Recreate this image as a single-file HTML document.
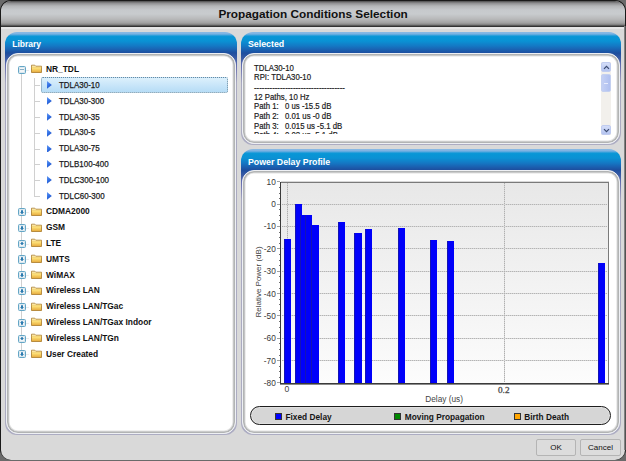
<!DOCTYPE html>
<html><head><meta charset="utf-8"><style>
*{margin:0;padding:0;box-sizing:border-box}
html,body{width:626px;height:461px;overflow:hidden;background:#6a6a6a;font-family:"Liberation Sans", sans-serif}
.a{position:absolute}
.t{position:absolute;white-space:nowrap;line-height:1}
</style></head>
<body>
<div class="a" style="left:0;top:0;width:626px;height:461px;background:#6a6a6a"></div><div class="a" style="left:0;top:0;width:626px;height:460px;border-radius:11px;background:#1a1a1a"></div><div class="a" style="left:1px;top:1px;width:624px;height:459px;border-radius:10px;background:#d9d9d9;overflow:hidden"><div class="a" style="left:0;top:0;width:624px;height:26px;background:linear-gradient(#4a4a4a 0px,#8c8c8e 2px,#b4b6b8 5px,#c6c9cc 9px,#c8cbce 13px,#b8b9ba 18px,#a0a0a0 22px,#7a7a7a 24px,#3a3a3a 25px,#2a2a2a 26px)"></div><div class="a" style="left:0;top:26px;width:624px;height:2px;background:#e6e6e6"></div></div><div class="a" style="left:623.6px;top:26px;width:2.4px;height:424px;background:linear-gradient(90deg,#9a9a9a,#3a3a3a)"></div><div class="t" style="left:218.4px;top:8.9px;font-size:11.8px;font-weight:bold;color:#111">Propagation Conditions Selection</div><div class="a" style="left:5px;top:31.6px;width:232px;height:403.59999999999997px;border-radius:12px;background:linear-gradient(#8abae4 0px,#7cb2e2 2px,#3aa2dc 3.2px,#0896d6 4.6px,#0a92d4 9px,#1478c4 14px,#1a62b2 17.5px,#1d4e9e 20.9px,#6a70b0 34.9px,#a8a8c0 50.9px,#acacc2 100%)"></div><div class="t" style="left:12.2px;top:40px;font-size:8.5px;font-weight:bold;color:#fff">Library</div><div class="a" style="left:6px;top:52.5px;width:230px;height:381.7px;border-radius:12px;background:#fff;border:1.9px solid #eef0f4;box-shadow:inset 0 0 0 1.6px #b2b4b4, inset 0 0 0 2.6px #e2e2e2"></div><div class="a" style="left:240.5px;top:31.6px;width:380.5px;height:113.4px;border-radius:12px;background:linear-gradient(#8abae4 0px,#7cb2e2 2px,#3aa2dc 3.2px,#0896d6 4.6px,#0a92d4 9px,#1478c4 14px,#1a62b2 17.5px,#1d4e9e 21.2px,#6a70b0 35.2px,#a8a8c0 51.2px,#acacc2 100%)"></div><div class="t" style="left:248px;top:39.8px;font-size:8.8px;font-weight:bold;color:#fff">Selected</div><div class="a" style="left:241.5px;top:52.8px;width:378.5px;height:91.2px;border-radius:12px;background:#fff;border:1.9px solid #eef0f4;box-shadow:inset 0 0 0 1.6px #b2b4b4, inset 0 0 0 2.6px #e2e2e2"></div><div class="a" style="left:240.5px;top:148.8px;width:380.5px;height:286.4px;border-radius:12px;background:linear-gradient(#8abae4 0px,#7cb2e2 2px,#3aa2dc 3.2px,#0896d6 4.6px,#0a92d4 9px,#1478c4 14px,#1a62b2 17.5px,#1d4e9e 20.9px,#6a70b0 34.9px,#a8a8c0 50.9px,#acacc2 100%)"></div><div class="t" style="left:248px;top:157.8px;font-size:8.8px;font-weight:bold;color:#fff">Power Delay Profile</div><div class="a" style="left:241.5px;top:169.70000000000002px;width:378.5px;height:264.5px;border-radius:12px;background:#fff;border:1.9px solid #eef0f4;box-shadow:inset 0 0 0 1.6px #b2b4b4, inset 0 0 0 2.6px #e2e2e2"></div><svg width="0" height="0" style="position:absolute"><defs><linearGradient id="ag" x1="0" y1="0" x2="0.6" y2="1"><stop offset="0" stop-color="#6a9cf2"/><stop offset="0.5" stop-color="#3474e8"/><stop offset="1" stop-color="#1c4cc0"/></linearGradient></defs></svg><div class="a" style="left:21px;top:73.5px;width:1px;height:276.76px;background:#d0d0d0"></div><div class="a" style="left:34px;top:77.5px;width:1px;height:118.56px;background:#d0d0d0"></div><div class="a" style="left:40.5px;top:77.2px;width:187.5px;height:15.5px;border:1px dotted #6a8aa0;border-radius:2px;background:linear-gradient(#dcf0fc,#b6dcf6)"></div><div class="a" style="left:17.5px;top:65.6px;width:8.3px;height:8.1px;border:1.4px solid #64a6c6;border-radius:1.5px;background:#f2f6f8;box-shadow:inset 0 0 0 0.8px #d4e4ec"></div><div class="a" style="left:19.6px;top:69.3px;width:4px;height:1px;background:#8aaec4"></div><div class="a" style="left:26px;top:69.5px;width:2.5px;height:1px;background:#ececec"></div><svg class="a" style="left:31.4px;top:64.3px" width="11" height="9" viewBox="0 0 11 9"><defs><linearGradient id="fg0" x1="0" y1="0" x2="0" y2="1"><stop offset="0" stop-color="#fff8d8"/><stop offset="0.4" stop-color="#fde27a"/><stop offset="1" stop-color="#e6a83a"/></linearGradient></defs><path d="M0.5 1.2 L3.8 1.2 L4.8 2.2 L10.5 2.2 L10.5 8.5 L0.5 8.5 Z" fill="url(#fg0)" stroke="#a87a28" stroke-width="0.8"/><path d="M0.5 3.2 L10.5 3.2" stroke="#e8c060" stroke-width="0.6"/></svg><div class="t" style="left:46px;top:65.0px;font-size:8.4px;font-weight:bold;color:#111">NR_TDL</div><div class="a" style="left:34px;top:85.32px;width:6px;height:1px;background:#d0d0d0"></div><svg class="a" style="left:47px;top:81.32px" width="5" height="7.8" viewBox="0 0 5 7.8"><path d="M0 0 L4.8 3.9 L0 7.8 Z" fill="url(#ag)"/></svg><div class="t" style="left:59px;top:81.02px;font-size:9px;color:#1a1a1a;transform:scaleX(0.885);transform-origin:0 0;-webkit-text-stroke:0.25px #1a1a1a">TDLA30-10</div><div class="a" style="left:34px;top:101.14px;width:6px;height:1px;background:#d0d0d0"></div><svg class="a" style="left:47px;top:97.14px" width="5" height="7.8" viewBox="0 0 5 7.8"><path d="M0 0 L4.8 3.9 L0 7.8 Z" fill="url(#ag)"/></svg><div class="t" style="left:59px;top:96.84px;font-size:9px;color:#1a1a1a;transform:scaleX(0.885);transform-origin:0 0;-webkit-text-stroke:0.25px #1a1a1a">TDLA30-300</div><div class="a" style="left:34px;top:116.96000000000001px;width:6px;height:1px;background:#d0d0d0"></div><svg class="a" style="left:47px;top:112.96000000000001px" width="5" height="7.8" viewBox="0 0 5 7.8"><path d="M0 0 L4.8 3.9 L0 7.8 Z" fill="url(#ag)"/></svg><div class="t" style="left:59px;top:112.66000000000001px;font-size:9px;color:#1a1a1a;transform:scaleX(0.885);transform-origin:0 0;-webkit-text-stroke:0.25px #1a1a1a">TDLA30-35</div><div class="a" style="left:34px;top:132.78px;width:6px;height:1px;background:#d0d0d0"></div><svg class="a" style="left:47px;top:128.78px" width="5" height="7.8" viewBox="0 0 5 7.8"><path d="M0 0 L4.8 3.9 L0 7.8 Z" fill="url(#ag)"/></svg><div class="t" style="left:59px;top:128.48px;font-size:9px;color:#1a1a1a;transform:scaleX(0.885);transform-origin:0 0;-webkit-text-stroke:0.25px #1a1a1a">TDLA30-5</div><div class="a" style="left:34px;top:148.6px;width:6px;height:1px;background:#d0d0d0"></div><svg class="a" style="left:47px;top:144.6px" width="5" height="7.8" viewBox="0 0 5 7.8"><path d="M0 0 L4.8 3.9 L0 7.8 Z" fill="url(#ag)"/></svg><div class="t" style="left:59px;top:144.29999999999998px;font-size:9px;color:#1a1a1a;transform:scaleX(0.885);transform-origin:0 0;-webkit-text-stroke:0.25px #1a1a1a">TDLA30-75</div><div class="a" style="left:34px;top:164.42000000000002px;width:6px;height:1px;background:#d0d0d0"></div><svg class="a" style="left:47px;top:160.42000000000002px" width="5" height="7.8" viewBox="0 0 5 7.8"><path d="M0 0 L4.8 3.9 L0 7.8 Z" fill="url(#ag)"/></svg><div class="t" style="left:59px;top:160.12px;font-size:9px;color:#1a1a1a;transform:scaleX(0.885);transform-origin:0 0;-webkit-text-stroke:0.25px #1a1a1a">TDLB100-400</div><div class="a" style="left:34px;top:180.24px;width:6px;height:1px;background:#d0d0d0"></div><svg class="a" style="left:47px;top:176.24px" width="5" height="7.8" viewBox="0 0 5 7.8"><path d="M0 0 L4.8 3.9 L0 7.8 Z" fill="url(#ag)"/></svg><div class="t" style="left:59px;top:175.94px;font-size:9px;color:#1a1a1a;transform:scaleX(0.885);transform-origin:0 0;-webkit-text-stroke:0.25px #1a1a1a">TDLC300-100</div><div class="a" style="left:34px;top:196.06px;width:6px;height:1px;background:#d0d0d0"></div><svg class="a" style="left:47px;top:192.06px" width="5" height="7.8" viewBox="0 0 5 7.8"><path d="M0 0 L4.8 3.9 L0 7.8 Z" fill="url(#ag)"/></svg><div class="t" style="left:59px;top:191.76px;font-size:9px;color:#1a1a1a;transform:scaleX(0.885);transform-origin:0 0;-webkit-text-stroke:0.25px #1a1a1a">TDLC60-300</div><div class="a" style="left:17.5px;top:207.98px;width:8.3px;height:8.1px;border:1.4px solid #64a6c6;border-radius:1.5px;background:#f2f6f8;box-shadow:inset 0 0 0 0.8px #d4e4ec"></div><div class="a" style="left:19.6px;top:211.68px;width:4px;height:1px;background:#8ab2ca"></div><div class="a" style="left:20.8px;top:209.98px;width:1.8px;height:3.8px;border-radius:1px;background:#2a7ab0"></div><div class="a" style="left:26px;top:211.88px;width:2.5px;height:1px;background:#ececec"></div><svg class="a" style="left:31.4px;top:206.68px" width="11" height="9" viewBox="0 0 11 9"><defs><linearGradient id="fg9" x1="0" y1="0" x2="0" y2="1"><stop offset="0" stop-color="#fff8d8"/><stop offset="0.4" stop-color="#fde27a"/><stop offset="1" stop-color="#e6a83a"/></linearGradient></defs><path d="M0.5 1.2 L3.8 1.2 L4.8 2.2 L10.5 2.2 L10.5 8.5 L0.5 8.5 Z" fill="url(#fg9)" stroke="#a87a28" stroke-width="0.8"/><path d="M0.5 3.2 L10.5 3.2" stroke="#e8c060" stroke-width="0.6"/></svg><div class="t" style="left:46px;top:207.38px;font-size:8.4px;font-weight:bold;color:#111">CDMA2000</div><div class="a" style="left:17.5px;top:223.79999999999998px;width:8.3px;height:8.1px;border:1.4px solid #64a6c6;border-radius:1.5px;background:#f2f6f8;box-shadow:inset 0 0 0 0.8px #d4e4ec"></div><div class="a" style="left:19.6px;top:227.5px;width:4px;height:1px;background:#8ab2ca"></div><div class="a" style="left:20.8px;top:225.79999999999998px;width:1.8px;height:3.8px;border-radius:1px;background:#2a7ab0"></div><div class="a" style="left:26px;top:227.7px;width:2.5px;height:1px;background:#ececec"></div><svg class="a" style="left:31.4px;top:222.5px" width="11" height="9" viewBox="0 0 11 9"><defs><linearGradient id="fg10" x1="0" y1="0" x2="0" y2="1"><stop offset="0" stop-color="#fff8d8"/><stop offset="0.4" stop-color="#fde27a"/><stop offset="1" stop-color="#e6a83a"/></linearGradient></defs><path d="M0.5 1.2 L3.8 1.2 L4.8 2.2 L10.5 2.2 L10.5 8.5 L0.5 8.5 Z" fill="url(#fg10)" stroke="#a87a28" stroke-width="0.8"/><path d="M0.5 3.2 L10.5 3.2" stroke="#e8c060" stroke-width="0.6"/></svg><div class="t" style="left:46px;top:223.2px;font-size:8.4px;font-weight:bold;color:#111">GSM</div><div class="a" style="left:17.5px;top:239.62px;width:8.3px;height:8.1px;border:1.4px solid #64a6c6;border-radius:1.5px;background:#f2f6f8;box-shadow:inset 0 0 0 0.8px #d4e4ec"></div><div class="a" style="left:19.6px;top:243.32000000000002px;width:4px;height:1px;background:#8ab2ca"></div><div class="a" style="left:20.8px;top:241.62px;width:1.8px;height:3.8px;border-radius:1px;background:#2a7ab0"></div><div class="a" style="left:26px;top:243.52px;width:2.5px;height:1px;background:#ececec"></div><svg class="a" style="left:31.4px;top:238.32000000000002px" width="11" height="9" viewBox="0 0 11 9"><defs><linearGradient id="fg11" x1="0" y1="0" x2="0" y2="1"><stop offset="0" stop-color="#fff8d8"/><stop offset="0.4" stop-color="#fde27a"/><stop offset="1" stop-color="#e6a83a"/></linearGradient></defs><path d="M0.5 1.2 L3.8 1.2 L4.8 2.2 L10.5 2.2 L10.5 8.5 L0.5 8.5 Z" fill="url(#fg11)" stroke="#a87a28" stroke-width="0.8"/><path d="M0.5 3.2 L10.5 3.2" stroke="#e8c060" stroke-width="0.6"/></svg><div class="t" style="left:46px;top:239.02px;font-size:8.4px;font-weight:bold;color:#111">LTE</div><div class="a" style="left:17.5px;top:255.44000000000003px;width:8.3px;height:8.1px;border:1.4px solid #64a6c6;border-radius:1.5px;background:#f2f6f8;box-shadow:inset 0 0 0 0.8px #d4e4ec"></div><div class="a" style="left:19.6px;top:259.14000000000004px;width:4px;height:1px;background:#8ab2ca"></div><div class="a" style="left:20.8px;top:257.44000000000005px;width:1.8px;height:3.8px;border-radius:1px;background:#2a7ab0"></div><div class="a" style="left:26px;top:259.34000000000003px;width:2.5px;height:1px;background:#ececec"></div><svg class="a" style="left:31.4px;top:254.14000000000004px" width="11" height="9" viewBox="0 0 11 9"><defs><linearGradient id="fg12" x1="0" y1="0" x2="0" y2="1"><stop offset="0" stop-color="#fff8d8"/><stop offset="0.4" stop-color="#fde27a"/><stop offset="1" stop-color="#e6a83a"/></linearGradient></defs><path d="M0.5 1.2 L3.8 1.2 L4.8 2.2 L10.5 2.2 L10.5 8.5 L0.5 8.5 Z" fill="url(#fg12)" stroke="#a87a28" stroke-width="0.8"/><path d="M0.5 3.2 L10.5 3.2" stroke="#e8c060" stroke-width="0.6"/></svg><div class="t" style="left:46px;top:254.84000000000003px;font-size:8.4px;font-weight:bold;color:#111">UMTS</div><div class="a" style="left:17.5px;top:271.26px;width:8.3px;height:8.1px;border:1.4px solid #64a6c6;border-radius:1.5px;background:#f2f6f8;box-shadow:inset 0 0 0 0.8px #d4e4ec"></div><div class="a" style="left:19.6px;top:274.96px;width:4px;height:1px;background:#8ab2ca"></div><div class="a" style="left:20.8px;top:273.26px;width:1.8px;height:3.8px;border-radius:1px;background:#2a7ab0"></div><div class="a" style="left:26px;top:275.15999999999997px;width:2.5px;height:1px;background:#ececec"></div><svg class="a" style="left:31.4px;top:269.96px" width="11" height="9" viewBox="0 0 11 9"><defs><linearGradient id="fg13" x1="0" y1="0" x2="0" y2="1"><stop offset="0" stop-color="#fff8d8"/><stop offset="0.4" stop-color="#fde27a"/><stop offset="1" stop-color="#e6a83a"/></linearGradient></defs><path d="M0.5 1.2 L3.8 1.2 L4.8 2.2 L10.5 2.2 L10.5 8.5 L0.5 8.5 Z" fill="url(#fg13)" stroke="#a87a28" stroke-width="0.8"/><path d="M0.5 3.2 L10.5 3.2" stroke="#e8c060" stroke-width="0.6"/></svg><div class="t" style="left:46px;top:270.65999999999997px;font-size:8.4px;font-weight:bold;color:#111">WiMAX</div><div class="a" style="left:17.5px;top:287.08000000000004px;width:8.3px;height:8.1px;border:1.4px solid #64a6c6;border-radius:1.5px;background:#f2f6f8;box-shadow:inset 0 0 0 0.8px #d4e4ec"></div><div class="a" style="left:19.6px;top:290.78000000000003px;width:4px;height:1px;background:#8ab2ca"></div><div class="a" style="left:20.8px;top:289.08000000000004px;width:1.8px;height:3.8px;border-radius:1px;background:#2a7ab0"></div><div class="a" style="left:26px;top:290.98px;width:2.5px;height:1px;background:#ececec"></div><svg class="a" style="left:31.4px;top:285.78000000000003px" width="11" height="9" viewBox="0 0 11 9"><defs><linearGradient id="fg14" x1="0" y1="0" x2="0" y2="1"><stop offset="0" stop-color="#fff8d8"/><stop offset="0.4" stop-color="#fde27a"/><stop offset="1" stop-color="#e6a83a"/></linearGradient></defs><path d="M0.5 1.2 L3.8 1.2 L4.8 2.2 L10.5 2.2 L10.5 8.5 L0.5 8.5 Z" fill="url(#fg14)" stroke="#a87a28" stroke-width="0.8"/><path d="M0.5 3.2 L10.5 3.2" stroke="#e8c060" stroke-width="0.6"/></svg><div class="t" style="left:46px;top:286.48px;font-size:8.4px;font-weight:bold;color:#111">Wireless LAN</div><div class="a" style="left:17.5px;top:302.90000000000003px;width:8.3px;height:8.1px;border:1.4px solid #64a6c6;border-radius:1.5px;background:#f2f6f8;box-shadow:inset 0 0 0 0.8px #d4e4ec"></div><div class="a" style="left:19.6px;top:306.6px;width:4px;height:1px;background:#8ab2ca"></div><div class="a" style="left:20.8px;top:304.90000000000003px;width:1.8px;height:3.8px;border-radius:1px;background:#2a7ab0"></div><div class="a" style="left:26px;top:306.8px;width:2.5px;height:1px;background:#ececec"></div><svg class="a" style="left:31.4px;top:301.6px" width="11" height="9" viewBox="0 0 11 9"><defs><linearGradient id="fg15" x1="0" y1="0" x2="0" y2="1"><stop offset="0" stop-color="#fff8d8"/><stop offset="0.4" stop-color="#fde27a"/><stop offset="1" stop-color="#e6a83a"/></linearGradient></defs><path d="M0.5 1.2 L3.8 1.2 L4.8 2.2 L10.5 2.2 L10.5 8.5 L0.5 8.5 Z" fill="url(#fg15)" stroke="#a87a28" stroke-width="0.8"/><path d="M0.5 3.2 L10.5 3.2" stroke="#e8c060" stroke-width="0.6"/></svg><div class="t" style="left:46px;top:302.3px;font-size:8.4px;font-weight:bold;color:#111">Wireless LAN/TGac</div><div class="a" style="left:17.5px;top:318.72px;width:8.3px;height:8.1px;border:1.4px solid #64a6c6;border-radius:1.5px;background:#f2f6f8;box-shadow:inset 0 0 0 0.8px #d4e4ec"></div><div class="a" style="left:19.6px;top:322.42px;width:4px;height:1px;background:#8ab2ca"></div><div class="a" style="left:20.8px;top:320.72px;width:1.8px;height:3.8px;border-radius:1px;background:#2a7ab0"></div><div class="a" style="left:26px;top:322.62px;width:2.5px;height:1px;background:#ececec"></div><svg class="a" style="left:31.4px;top:317.42px" width="11" height="9" viewBox="0 0 11 9"><defs><linearGradient id="fg16" x1="0" y1="0" x2="0" y2="1"><stop offset="0" stop-color="#fff8d8"/><stop offset="0.4" stop-color="#fde27a"/><stop offset="1" stop-color="#e6a83a"/></linearGradient></defs><path d="M0.5 1.2 L3.8 1.2 L4.8 2.2 L10.5 2.2 L10.5 8.5 L0.5 8.5 Z" fill="url(#fg16)" stroke="#a87a28" stroke-width="0.8"/><path d="M0.5 3.2 L10.5 3.2" stroke="#e8c060" stroke-width="0.6"/></svg><div class="t" style="left:46px;top:318.12px;font-size:8.4px;font-weight:bold;color:#111">Wireless LAN/TGax Indoor</div><div class="a" style="left:17.5px;top:334.54px;width:8.3px;height:8.1px;border:1.4px solid #64a6c6;border-radius:1.5px;background:#f2f6f8;box-shadow:inset 0 0 0 0.8px #d4e4ec"></div><div class="a" style="left:19.6px;top:338.24px;width:4px;height:1px;background:#8ab2ca"></div><div class="a" style="left:20.8px;top:336.54px;width:1.8px;height:3.8px;border-radius:1px;background:#2a7ab0"></div><div class="a" style="left:26px;top:338.44px;width:2.5px;height:1px;background:#ececec"></div><svg class="a" style="left:31.4px;top:333.24px" width="11" height="9" viewBox="0 0 11 9"><defs><linearGradient id="fg17" x1="0" y1="0" x2="0" y2="1"><stop offset="0" stop-color="#fff8d8"/><stop offset="0.4" stop-color="#fde27a"/><stop offset="1" stop-color="#e6a83a"/></linearGradient></defs><path d="M0.5 1.2 L3.8 1.2 L4.8 2.2 L10.5 2.2 L10.5 8.5 L0.5 8.5 Z" fill="url(#fg17)" stroke="#a87a28" stroke-width="0.8"/><path d="M0.5 3.2 L10.5 3.2" stroke="#e8c060" stroke-width="0.6"/></svg><div class="t" style="left:46px;top:333.94px;font-size:8.4px;font-weight:bold;color:#111">Wireless LAN/TGn</div><div class="a" style="left:17.5px;top:350.36px;width:8.3px;height:8.1px;border:1.4px solid #64a6c6;border-radius:1.5px;background:#f2f6f8;box-shadow:inset 0 0 0 0.8px #d4e4ec"></div><div class="a" style="left:19.6px;top:354.06px;width:4px;height:1px;background:#8ab2ca"></div><div class="a" style="left:20.8px;top:352.36px;width:1.8px;height:3.8px;border-radius:1px;background:#2a7ab0"></div><div class="a" style="left:26px;top:354.26px;width:2.5px;height:1px;background:#ececec"></div><svg class="a" style="left:31.4px;top:349.06px" width="11" height="9" viewBox="0 0 11 9"><defs><linearGradient id="fg18" x1="0" y1="0" x2="0" y2="1"><stop offset="0" stop-color="#fff8d8"/><stop offset="0.4" stop-color="#fde27a"/><stop offset="1" stop-color="#e6a83a"/></linearGradient></defs><path d="M0.5 1.2 L3.8 1.2 L4.8 2.2 L10.5 2.2 L10.5 8.5 L0.5 8.5 Z" fill="url(#fg18)" stroke="#a87a28" stroke-width="0.8"/><path d="M0.5 3.2 L10.5 3.2" stroke="#e8c060" stroke-width="0.6"/></svg><div class="t" style="left:46px;top:349.76px;font-size:8.4px;font-weight:bold;color:#111">User Created</div><div class="a" style="left:250px;top:58px;width:345px;height:75.8px;overflow:hidden"><div class="t" style="left:3.6px;top:5.599999999999994px;font-size:8.8px;color:#1a1a1a;transform:scaleX(0.886);transform-origin:0 0;-webkit-text-stroke:0.2px #1a1a1a">TDLA30-10</div><div class="t" style="left:3.6px;top:15.249999999999998px;font-size:8.8px;color:#1a1a1a;transform:scaleX(0.886);transform-origin:0 0;-webkit-text-stroke:0.2px #1a1a1a">RPI: TDLA30-10</div><div class="t" style="left:3.6px;top:25.59999999999999px;font-size:8.8px;color:#1a1a1a;transform:scaleX(0.886);transform-origin:0 0;-webkit-text-stroke:0.2px #1a1a1a">-----------------------------------</div><div class="t" style="left:3.6px;top:34.55px;font-size:8.8px;color:#1a1a1a;transform:scaleX(0.886);transform-origin:0 0;-webkit-text-stroke:0.2px #1a1a1a">12 Paths, 10 Hz</div><div class="t" style="left:3.6px;top:44.19999999999999px;font-size:8.8px;color:#1a1a1a;transform:scaleX(0.886);transform-origin:0 0;-webkit-text-stroke:0.2px #1a1a1a">Path 1:</div><div class="t" style="left:34.5px;top:44.19999999999999px;font-size:8.8px;color:#1a1a1a;transform:scaleX(0.886);transform-origin:0 0;-webkit-text-stroke:0.2px #1a1a1a">0 us -15.5 dB</div><div class="t" style="left:3.6px;top:53.849999999999994px;font-size:8.8px;color:#1a1a1a;transform:scaleX(0.886);transform-origin:0 0;-webkit-text-stroke:0.2px #1a1a1a">Path 2:</div><div class="t" style="left:34.5px;top:53.849999999999994px;font-size:8.8px;color:#1a1a1a;transform:scaleX(0.886);transform-origin:0 0;-webkit-text-stroke:0.2px #1a1a1a">0.01 us -0 dB</div><div class="t" style="left:3.6px;top:63.50000000000001px;font-size:8.8px;color:#1a1a1a;transform:scaleX(0.886);transform-origin:0 0;-webkit-text-stroke:0.2px #1a1a1a">Path 3:</div><div class="t" style="left:34.5px;top:63.50000000000001px;font-size:8.8px;color:#1a1a1a;transform:scaleX(0.886);transform-origin:0 0;-webkit-text-stroke:0.2px #1a1a1a">0.015 us -5.1 dB</div><div class="t" style="left:3.6px;top:73.14999999999998px;font-size:8.8px;color:#1a1a1a;transform:scaleX(0.886);transform-origin:0 0;-webkit-text-stroke:0.2px #1a1a1a">Path 4:</div><div class="t" style="left:34.5px;top:73.14999999999998px;font-size:8.8px;color:#1a1a1a;transform:scaleX(0.886);transform-origin:0 0;-webkit-text-stroke:0.2px #1a1a1a">0.02 us -5.1 dB</div></div><div class="a" style="left:600.5px;top:61.8px;width:10.5px;height:73px;background:#f2f0ec"></div><div class="a" style="left:600.5px;top:61.8px;width:10.5px;height:10.5px;border-radius:2px;background:linear-gradient(#d4ddf8,#b4c4f0);border:1px solid #c0ccf0"></div><svg class="a" style="left:602.5px;top:64.5px" width="7" height="5" viewBox="0 0 7 5"><path d="M1 3.8 L3.5 1.3 L6 3.8" fill="none" stroke="#3a4a70" stroke-width="1.2"/></svg><div class="a" style="left:600.5px;top:73.6px;width:10.5px;height:18.6px;border-radius:2px;background:linear-gradient(90deg,#c4d0f4,#b0c0f0);border:1px solid #c4d0f0"></div><div class="a" style="left:603.5px;top:82.5px;width:4px;height:0.8px;background:#e8ecfc"></div><div class="a" style="left:600.5px;top:124.8px;width:10.5px;height:10.5px;border-radius:2px;background:linear-gradient(#d4ddf8,#b4c4f0);border:1px solid #c0ccf0"></div><svg class="a" style="left:602.5px;top:127.5px" width="7" height="5" viewBox="0 0 7 5"><path d="M1 1.2 L3.5 3.7 L6 1.2" fill="none" stroke="#3a4a70" stroke-width="1.2"/></svg><div class="a" style="left:281px;top:182px;width:328px;height:201px;background:linear-gradient(#e8e8e8,#fcfcfc);border-top:1px solid #7a7a7a;border-right:1px solid #7a7a7a;box-shadow:0 -0.5px 0 #b0b0b0"></div><div class="a" style="left:282px;top:204px;width:325px;height:1px;background:repeating-linear-gradient(90deg,#b4b4b4 0 1px,#d6d6d6 1px 2px)"></div><div class="a" style="left:282px;top:226px;width:325px;height:1px;background:repeating-linear-gradient(90deg,#b4b4b4 0 1px,#d6d6d6 1px 2px)"></div><div class="a" style="left:282px;top:248px;width:325px;height:1px;background:repeating-linear-gradient(90deg,#b4b4b4 0 1px,#d6d6d6 1px 2px)"></div><div class="a" style="left:282px;top:271px;width:325px;height:1px;background:repeating-linear-gradient(90deg,#b4b4b4 0 1px,#d6d6d6 1px 2px)"></div><div class="a" style="left:282px;top:293px;width:325px;height:1px;background:repeating-linear-gradient(90deg,#b4b4b4 0 1px,#d6d6d6 1px 2px)"></div><div class="a" style="left:282px;top:315px;width:325px;height:1px;background:repeating-linear-gradient(90deg,#b4b4b4 0 1px,#d6d6d6 1px 2px)"></div><div class="a" style="left:282px;top:338px;width:325px;height:1px;background:repeating-linear-gradient(90deg,#b4b4b4 0 1px,#d6d6d6 1px 2px)"></div><div class="a" style="left:282px;top:360px;width:325px;height:1px;background:repeating-linear-gradient(90deg,#b4b4b4 0 1px,#d6d6d6 1px 2px)"></div><div class="a" style="left:287px;top:183px;width:1px;height:199px;background:repeating-linear-gradient(#b0b0b0 0 1px,#d6d6d6 1px 2px)"></div><div class="a" style="left:504px;top:183px;width:1px;height:199px;background:repeating-linear-gradient(#b0b0b0 0 1px,#d6d6d6 1px 2px)"></div><div class="a" style="left:284.1px;top:238.5px;width:7.3px;height:144.5px;background:#0000fa;border-left:1px solid #1414b4"></div><div class="a" style="left:295.0px;top:204.0px;width:7.3px;height:179.0px;background:#0000fa;border-left:1px solid #1414b4"></div><div class="a" style="left:300.2px;top:215.2px;width:7.3px;height:167.8px;background:#0000fa;border-left:1px solid #1414b4"></div><div class="a" style="left:305.1px;top:215.2px;width:7.3px;height:167.8px;background:#0000fa;border-left:1px solid #1414b4"></div><div class="a" style="left:311.4px;top:225.1px;width:7.3px;height:157.9px;background:#0000fa;border-left:1px solid #1414b4"></div><div class="a" style="left:338.1px;top:222.1px;width:7.3px;height:160.9px;background:#0000fa;border-left:1px solid #1414b4"></div><div class="a" style="left:354.3px;top:232.6px;width:7.3px;height:150.4px;background:#0000fa;border-left:1px solid #1414b4"></div><div class="a" style="left:364.9px;top:229.2px;width:7.3px;height:153.8px;background:#0000fa;border-left:1px solid #1414b4"></div><div class="a" style="left:397.7px;top:228.2px;width:7.3px;height:154.8px;background:#0000fa;border-left:1px solid #1414b4"></div><div class="a" style="left:430.1px;top:239.9px;width:7.3px;height:143.1px;background:#0000fa;border-left:1px solid #1414b4"></div><div class="a" style="left:446.8px;top:240.8px;width:7.3px;height:142.2px;background:#0000fa;border-left:1px solid #1414b4"></div><div class="a" style="left:597.7px;top:262.6px;width:7.3px;height:120.39999999999998px;background:#0000fa;border-left:1px solid #1414b4"></div><div class="a" style="left:280px;top:182px;width:1px;height:202px;background:#3a3a3a"></div><div class="a" style="left:280px;top:383px;width:329px;height:1px;background:#3a3a3a"></div><div class="a" style="left:280px;top:384px;width:329px;height:1px;background:#8a8a8a"></div><div class="a" style="left:277px;top:181.4px;width:3px;height:1px;background:#a0a0a0"></div><div class="t" style="right:350.2px;top:177.8px;font-size:8.3px;color:#383838">10</div><div class="a" style="left:278.6px;top:186.985px;width:1.6px;height:1px;background:#707070"></div><div class="a" style="left:278.6px;top:192.57px;width:1.6px;height:1px;background:#707070"></div><div class="a" style="left:278.6px;top:198.155px;width:1.6px;height:1px;background:#707070"></div><div class="a" style="left:277px;top:203.74px;width:3px;height:1px;background:#a0a0a0"></div><div class="t" style="right:350.2px;top:200.14000000000001px;font-size:8.3px;color:#383838">0</div><div class="a" style="left:278.6px;top:209.32500000000002px;width:1.6px;height:1px;background:#707070"></div><div class="a" style="left:278.6px;top:214.91px;width:1.6px;height:1px;background:#707070"></div><div class="a" style="left:278.6px;top:220.495px;width:1.6px;height:1px;background:#707070"></div><div class="a" style="left:277px;top:226.08px;width:3px;height:1px;background:#a0a0a0"></div><div class="t" style="right:350.2px;top:222.48000000000002px;font-size:8.3px;color:#383838">-10</div><div class="a" style="left:278.6px;top:231.66500000000002px;width:1.6px;height:1px;background:#707070"></div><div class="a" style="left:278.6px;top:237.25px;width:1.6px;height:1px;background:#707070"></div><div class="a" style="left:278.6px;top:242.835px;width:1.6px;height:1px;background:#707070"></div><div class="a" style="left:277px;top:248.42000000000002px;width:3px;height:1px;background:#a0a0a0"></div><div class="t" style="right:350.2px;top:244.82000000000002px;font-size:8.3px;color:#383838">-20</div><div class="a" style="left:278.6px;top:254.005px;width:1.6px;height:1px;background:#707070"></div><div class="a" style="left:278.6px;top:259.59000000000003px;width:1.6px;height:1px;background:#707070"></div><div class="a" style="left:278.6px;top:265.175px;width:1.6px;height:1px;background:#707070"></div><div class="a" style="left:277px;top:270.76px;width:3px;height:1px;background:#a0a0a0"></div><div class="t" style="right:350.2px;top:267.15999999999997px;font-size:8.3px;color:#383838">-30</div><div class="a" style="left:278.6px;top:276.345px;width:1.6px;height:1px;background:#707070"></div><div class="a" style="left:278.6px;top:281.93px;width:1.6px;height:1px;background:#707070"></div><div class="a" style="left:278.6px;top:287.515px;width:1.6px;height:1px;background:#707070"></div><div class="a" style="left:277px;top:293.1px;width:3px;height:1px;background:#a0a0a0"></div><div class="t" style="right:350.2px;top:289.5px;font-size:8.3px;color:#383838">-40</div><div class="a" style="left:278.6px;top:298.685px;width:1.6px;height:1px;background:#707070"></div><div class="a" style="left:278.6px;top:304.27px;width:1.6px;height:1px;background:#707070"></div><div class="a" style="left:278.6px;top:309.855px;width:1.6px;height:1px;background:#707070"></div><div class="a" style="left:277px;top:315.44px;width:3px;height:1px;background:#a0a0a0"></div><div class="t" style="right:350.2px;top:311.84px;font-size:8.3px;color:#383838">-50</div><div class="a" style="left:278.6px;top:321.025px;width:1.6px;height:1px;background:#707070"></div><div class="a" style="left:278.6px;top:326.61px;width:1.6px;height:1px;background:#707070"></div><div class="a" style="left:278.6px;top:332.195px;width:1.6px;height:1px;background:#707070"></div><div class="a" style="left:277px;top:337.78px;width:3px;height:1px;background:#a0a0a0"></div><div class="t" style="right:350.2px;top:334.17999999999995px;font-size:8.3px;color:#383838">-60</div><div class="a" style="left:278.6px;top:343.365px;width:1.6px;height:1px;background:#707070"></div><div class="a" style="left:278.6px;top:348.95000000000005px;width:1.6px;height:1px;background:#707070"></div><div class="a" style="left:278.6px;top:354.53499999999997px;width:1.6px;height:1px;background:#707070"></div><div class="a" style="left:277px;top:360.12px;width:3px;height:1px;background:#a0a0a0"></div><div class="t" style="right:350.2px;top:356.52px;font-size:8.3px;color:#383838">-70</div><div class="a" style="left:278.6px;top:365.70500000000004px;width:1.6px;height:1px;background:#707070"></div><div class="a" style="left:278.6px;top:371.28999999999996px;width:1.6px;height:1px;background:#707070"></div><div class="a" style="left:278.6px;top:376.875px;width:1.6px;height:1px;background:#707070"></div><div class="a" style="left:277px;top:382.46000000000004px;width:3px;height:1px;background:#a0a0a0"></div><div class="t" style="right:350.2px;top:378.86px;font-size:8.3px;color:#383838">-80</div><div class="t" style="left:284.6px;top:385.2px;font-size:8.6px;color:#444">0</div><div class="t" style="left:498px;top:385.9px;font-size:9.2px;font-family:'Liberation Serif',serif;color:#3a3a3a;-webkit-text-stroke:0.3px #555">0.2</div><div class="t" style="left:425.2px;top:395.3px;font-size:8.3px;color:#444">Delay (us)</div><div class="t" style="left:259.2px;top:281.5px;font-size:8px;color:#444;transform:translate(-50%,-50%) rotate(-90deg)">Relative Power (dB)</div><div class="a" style="left:250.4px;top:406.2px;width:360.6px;height:18.9px;border-radius:9.4px;border:1.8px solid #1e1e1e;background:#d6d6d6;box-shadow:inset 0 0 0 0.8px #e4e4e4"></div><div class="a" style="left:275.1px;top:412.9px;width:6.7px;height:6.7px;background:#0000ff;border:0.7px solid #333"></div><div class="t" style="left:285.5px;top:413.1px;font-size:8.3px;font-weight:bold;color:#151515">Fixed Delay</div><div class="a" style="left:394.4px;top:412.9px;width:6.7px;height:6.7px;background:#008800;border:0.7px solid #333"></div><div class="t" style="left:404.8px;top:413.1px;font-size:8.3px;font-weight:bold;color:#151515">Moving Propagation</div><div class="a" style="left:514.4px;top:412.9px;width:6.7px;height:6.7px;background:#ffa500;border:0.7px solid #333"></div><div class="t" style="left:524.3px;top:413.1px;font-size:8.3px;font-weight:bold;color:#151515">Birth Death</div><div class="a" style="left:535.9px;top:439.2px;width:40px;height:16.6px;border:1px solid #b4b4b4;border-radius:2px;background:#dcdcdc"></div><div class="t" style="left:550.2px;top:444.2px;font-size:8px;color:#111">OK</div><div class="a" style="left:580.1px;top:439.2px;width:40.7px;height:16.6px;border:1px solid #b4b4b4;border-radius:2px;background:#dcdcdc"></div><div class="t" style="left:588.1px;top:444.2px;font-size:8px;color:#111">Cancel</div>
</body></html>
